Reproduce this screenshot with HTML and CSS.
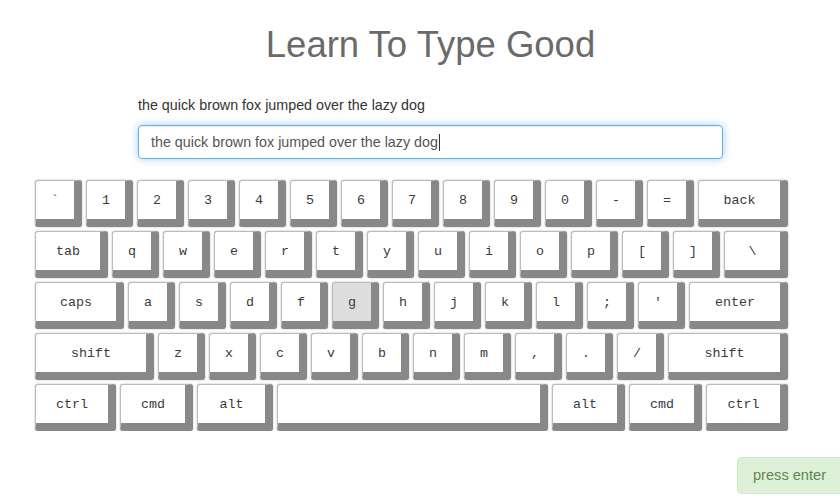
FILE: index.html
```html
<!DOCTYPE html>
<html>
<head>
<meta charset="utf-8">
<title>Learn To Type Good</title>
<link rel="stylesheet" href="styles.css">
</head>
<body>
<div class="column">
  <h1 class="title">Learn To Type Good</h1>
  <p class="sentence">the quick brown fox jumped over the lazy dog</p>
  <div class="field" role="textbox">the quick brown fox jumped over the lazy dog<span class="caret"></span></div>
</div>
<div class="keyboard">
  <div class="row">
    <div class="key">`</div><div class="key">1</div><div class="key">2</div><div class="key">3</div><div class="key">4</div><div class="key">5</div><div class="key">6</div><div class="key">7</div><div class="key">8</div><div class="key">9</div><div class="key">0</div><div class="key">-</div><div class="key">=</div><div class="key k90">back</div>
  </div>
  <div class="row">
    <div class="key k73">tab</div><div class="key">q</div><div class="key">w</div><div class="key">e</div><div class="key">r</div><div class="key">t</div><div class="key">y</div><div class="key">u</div><div class="key">i</div><div class="key">o</div><div class="key">p</div><div class="key">[</div><div class="key">]</div><div class="key k64">\</div>
  </div>
  <div class="row">
    <div class="key k89">caps</div><div class="key">a</div><div class="key">s</div><div class="key">d</div><div class="key">f</div><div class="key active">g</div><div class="key">h</div><div class="key">j</div><div class="key">k</div><div class="key">l</div><div class="key">;</div><div class="key">'</div><div class="key k99">enter</div>
  </div>
  <div class="row">
    <div class="key k119">shift</div><div class="key">z</div><div class="key">x</div><div class="key">c</div><div class="key">v</div><div class="key">b</div><div class="key">n</div><div class="key">m</div><div class="key">,</div><div class="key">.</div><div class="key">/</div><div class="key k120">shift</div>
  </div>
  <div class="row">
    <div class="key k81">ctrl</div><div class="key k73">cmd</div><div class="key k76">alt</div><div class="key k271"></div><div class="key k73">alt</div><div class="key k73">cmd</div><div class="key k82">ctrl</div>
  </div>
</div>
<div class="toast">press enter</div>
</body>
</html>
```
FILE: styles.css
```css
html, body {
  margin: 0;
  padding: 0;
  background: #fff;
}
body {
  font-family: "Liberation Sans", Arial, sans-serif;
  font-size: 14px;
  color: #333;
}
.column {
  margin-left: 138px;
  width: 585px;
}
.title {
  margin: 25px 0 0;
  font-size: 36.5px;
  line-height: 40px;
  font-weight: 400;
  color: #6a6a6a;
  text-align: center;
}
.sentence {
  margin: 30px 0 0;
  line-height: 20px;
  font-size: 14.3px;
  color: #333;
}
.field {
  box-sizing: border-box;
  margin-top: 10px;
  height: 34px;
  padding: 6px 12px;
  line-height: 20px;
  font-size: 14.3px;
  color: #555;
  border: 1px solid #66afe9;
  border-radius: 4px;
  box-shadow: inset 0 1px 1px rgba(0,0,0,.075), 0 0 8px rgba(102,175,233,.6);
}
.caret {
  display: inline-block;
  width: 1px;
  height: 17px;
  background: #333;
  vertical-align: -4px;
  margin-left: 1px;
}
.keyboard {
  margin: 21px 0 0 35px;
  display: flex;
  flex-direction: column;
  gap: 4px;
}
.row {
  display: flex;
  gap: 4px;
}
.key {
  box-sizing: border-box;
  width: 47px;
  height: 47px;
  flex: none;
  display: flex;
  align-items: center;
  justify-content: center;
  background: #fff;
  border: 1px solid #bbb;
  border-right: 8px solid #888;
  border-bottom: 8px solid #888;
  border-radius: 3px;
  box-shadow: 0 0 2px rgba(0,0,0,.3);
  font-family: "Liberation Mono", "Courier New", monospace;
  font-size: 13.33px;
  color: #3a3a3a;
}
.key.active { background: #ddd; }
.k64 { width: 64px; }
.k73 { width: 73px; }
.k76 { width: 76px; }
.k81 { width: 81px; }
.k82 { width: 82px; }
.k89 { width: 89px; }
.k90 { width: 90px; }
.k99 { width: 99px; }
.k119 { width: 119px; }
.k120 { width: 120px; }
.k271 { width: 271px; }
.toast {
  position: fixed;
  left: 737px;
  top: 457px;
  box-sizing: border-box;
  width: 130px;
  height: 37px;
  padding: 0 15px;
  line-height: 35px;
  font-size: 14.6px;
  color: #5f8452;
  background: #dff0d8;
  border: 1px solid #d6e9c6;
  border-radius: 4px;
}
```
